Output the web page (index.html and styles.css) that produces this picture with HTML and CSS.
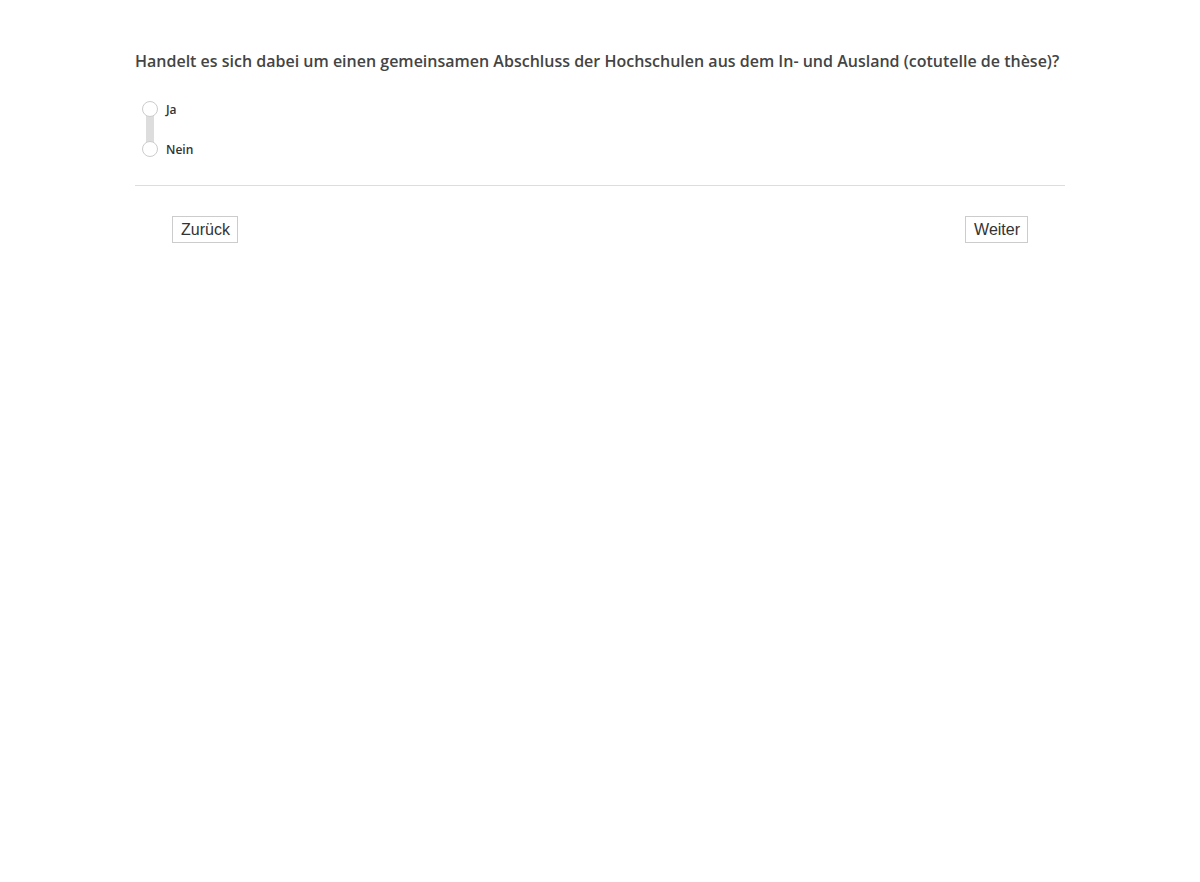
FILE: index.html
```html
<!DOCTYPE html>
<html lang="de">
<head>
    <meta charset="UTF-8">
    <title>Umfrage</title>
    <link rel="stylesheet" href="styles.css">
</head>
<body>
    <div class="survey">
        <div class="question">
            <h2 class="question-title">Handelt es sich dabei um einen gemeinsamen Abschluss der Hochschulen aus dem In- und Ausland (cotutelle de thèse)?</h2>
            <div class="choices">
                <label class="choice">
                    <span class="radio"></span>
                    <span class="choice-label">Ja</span>
                </label>
                <label class="choice">
                    <span class="radio"></span>
                    <span class="choice-label">Nein</span>
                </label>
            </div>
        </div>
        <div class="nav">
            <button class="nav-btn" type="button">Zurück</button>
            <button class="nav-btn" type="button">Weiter</button>
        </div>
    </div>
</body>
</html>
```

FILE: styles.css
```css
body {
    margin: 0;
    background: #fff;
    font-family: 'Open Sans', sans-serif;
    color: #444;
}

.survey {
    max-width: 930px;
    margin: 0 auto;
    padding-top: 49px;
}

.question {
    border-bottom: 1px solid #ddd;
    padding-bottom: 28px;
}

.question-title {
    margin: 0 0 28px;
    font-size: 16px;
    font-weight: 600;
    line-height: 24px;
    color: #444;
}

.choices {
    position: relative;
    display: flex;
    flex-direction: column;
    gap: 24px;
    padding-left: 7px;
}

.choices::before {
    content: '';
    position: absolute;
    left: 11px;
    top: 12px;
    bottom: 12px;
    width: 8px;
    background: #ddd;
}

.choice {
    position: relative;
    display: flex;
    align-items: center;
    gap: 8px;
    height: 16px;
}

.radio {
    width: 14px;
    height: 14px;
    border: 1px solid #ccc;
    border-radius: 50%;
    background: #fff;
}

.choice-label {
    font-size: 12px;
    font-weight: 600;
    color: #333;
}

.nav {
    display: flex;
    justify-content: space-between;
    padding: 30px 37px;
}

.nav-btn {
    font-family: 'Liberation Sans', Arial, sans-serif;
    font-size: 16px;
    color: #333;
    background: #fff;
    border: 1px solid #ccc;
    padding: 3px 7px 3px 8px;
    height: 27px;
    line-height: 19px;
}
```
